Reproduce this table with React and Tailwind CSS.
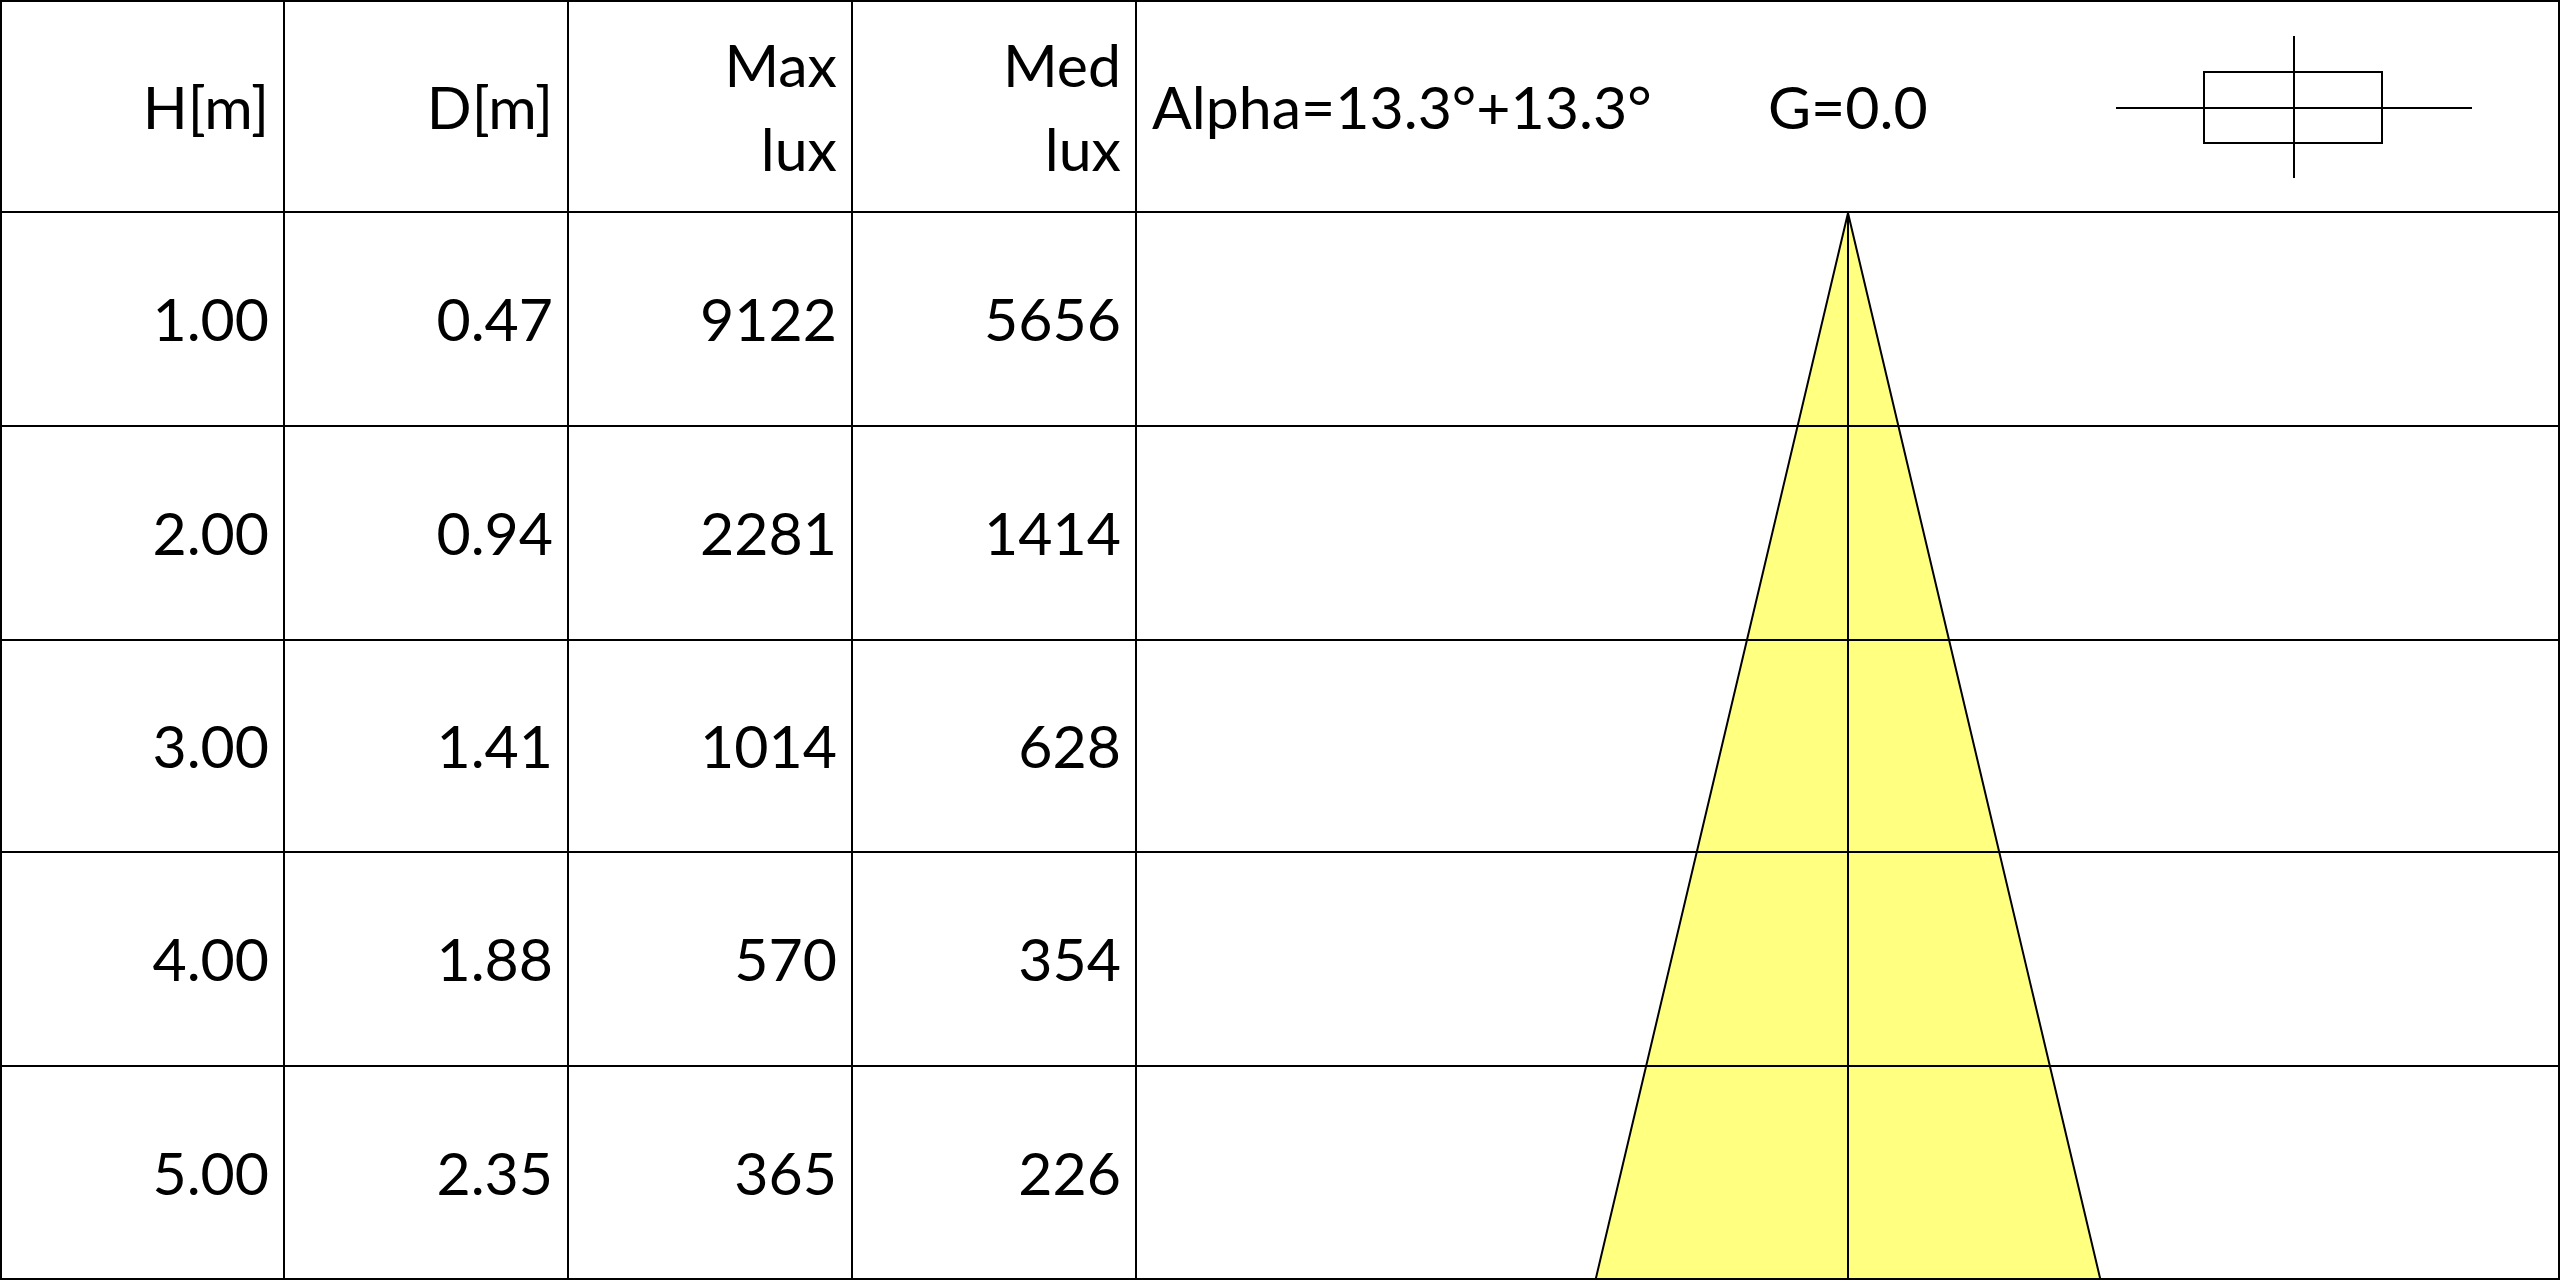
const rows = [
  ['1.00', '0.47', '9122', '5656'],
  ['2.00', '0.94', '2281', '1414'],
  ['3.00', '1.41', '1014', '628'],
  ['4.00', '1.88', '570', '354'],
  ['5.00', '2.35', '365', '226'],
];

const rowStarts = ['row-start-2', 'row-start-3', 'row-start-4', 'row-start-5', 'row-start-6'];

const cell = 'flex items-center justify-end pr-[14px] border-r-2 border-b-2 border-black text-right';

function LuminaireIcon() {
  return (
    <svg width="356" height="142" viewBox="0 0 356 142" className="ml-auto mr-[86px]">
      <line x1="0" y1="72" x2="356" y2="72" stroke="#000" strokeWidth="2" />
      <rect x="88" y="36" width="178" height="71" fill="none" stroke="#000" strokeWidth="2" />
      <line x1="178" y1="0" x2="178" y2="142" stroke="#000" strokeWidth="2" />
    </svg>
  );
}

export default function App() {
  return (
    <div className="w-[2560px] h-[1280px] bg-white text-black grid grid-cols-[283px_284px_284px_284px_1fr] grid-rows-[211px_214px_214px_212px_214px_213px] border-l-2 border-t-2 border-black font-['Lato',sans-serif] text-[59px] leading-[84px]">
      <div className={cell}>H[m]</div>
      <div className={cell}>D[m]</div>
      <div className={cell}>
        <div>
          Max
          <br />
          lux
        </div>
      </div>
      <div className={cell}>
        <div>
          Med
          <br />
          lux
        </div>
      </div>
      <div className="col-start-5 row-start-1 flex items-center border-r-2 border-b-2 border-black pl-[15px]">
        <span className="w-[616px] whitespace-nowrap">Alpha=13.3°+13.3°</span>
        <span className="whitespace-nowrap">G=0.0</span>
        <LuminaireIcon />
      </div>

      {/* beam cone drawn under the right column rows */}
      <svg
        className="col-start-5 row-start-2 row-span-5 w-full h-full"
        viewBox="0 0 1423 1067"
        preserveAspectRatio="none"
      >
        <polygon points="711,0 458.5,1067 963.5,1067" fill="#ffff80" stroke="#000" strokeWidth="2" />
        <line x1="711" y1="0" x2="711" y2="1067" stroke="#000" strokeWidth="2" />
      </svg>

      {rows.map((r, i) => (
        <div key={i} className="contents">
          <div className={cell}>{r[0]}</div>
          <div className={cell}>{r[1]}</div>
          <div className={cell}>{r[2]}</div>
          <div className={cell}>{r[3]}</div>
          <div className={`col-start-5 ${rowStarts[i]} border-r-2 border-b-2 border-black`} />
        </div>
      ))}
    </div>
  );
}
